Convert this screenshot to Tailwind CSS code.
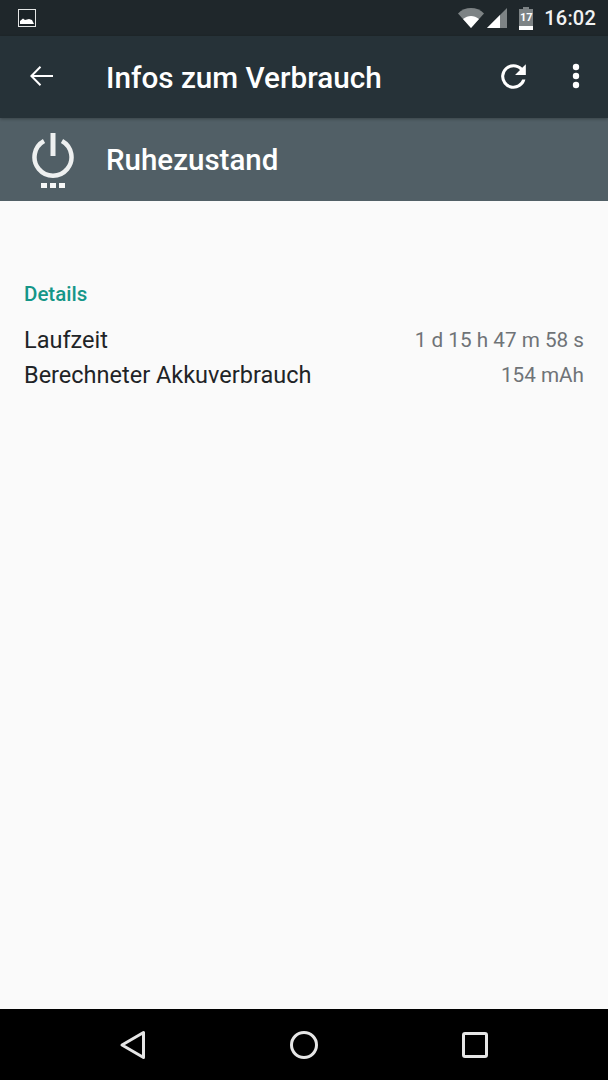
<!DOCTYPE html>
<html lang="de">
  <head>
    <meta charset="UTF-8">
    <title>Infos zum Verbrauch</title>
    <script src="https://cdn.jsdelivr.net/npm/@tailwindcss/browser@4"></script>
  </head>
  <body class="w-[608px] h-[1080px] overflow-hidden flex flex-col bg-[#fafafa] font-['Roboto',sans-serif]">
    <!-- status bar -->
    <div class="h-[36px] shrink-0 bg-[#1f272b] flex items-center pl-[18px] pr-[12px]">
      <svg width="18" height="18" viewBox="0 0 18 18" class="mt-[-1px]">
        <rect x="0.5" y="0.5" width="17" height="17" fill="#1a2226" stroke="#e4e6e6" stroke-width="1"/>
        <path d="M2 15 L2 12 L5 9.5 L7 11 L11 10 L14 11 L16 15 Z" fill="#fff"/>
      </svg>
      <div class="ml-auto flex items-center">
        <svg width="26" height="20" viewBox="0 0 26 20" class="ml-[-1px]">
          <path d="M0 5.5 C7 -1.8 19 -1.8 26 5.5 L13 20 Z" fill="#7d8385"/>
          <path d="M5 11 C10 7 16 7 21 11 L13 20 Z" fill="#fff"/>
        </svg>
        <svg width="20" height="20" viewBox="0 0 20 20" class="ml-[3px]">
          <path d="M0 20 L20 0 L20 20 Z" fill="#7d8385"/>
          <path d="M0 20 L13 7 L13 20 Z" fill="#fff"/>
        </svg>
        <div class="ml-[12px] w-[14px] h-[23px] relative flex flex-col items-center">
          <div class="w-[6px] h-[2px] bg-[#7d8385]"></div>
          <div class="w-[14px] h-[21px] bg-[#7d8385] flex flex-col justify-end">
            <div class="h-[4px] bg-white"></div>
          </div>
          <span class="absolute top-[5px] left-0 w-full text-center text-[11px] leading-[12px] font-bold text-white">17</span>
        </div>
        <span class="ml-[11px] text-[20px] leading-[24px] font-medium text-[#f1f2f2] tracking-[0.2px]">16:02</span>
      </div>
    </div>

    <!-- toolbar -->
    <div class="h-[82px] shrink-0 bg-[#263238] flex items-center relative z-10 shadow-[0_1px_3px_rgba(0,0,0,0.3)]">
      <svg width="24" height="24" viewBox="0 0 24 24" class="ml-[29px] mt-[-2px]">
        <path d="M24 11H4.8l7.4-7.4L10.8 2 1 12l9.8 10 1.4-1.6L4.8 13H24z" fill="#fff"/>
      </svg>
      <h1 class="ml-[53px] mt-[1px] text-[29.7px] leading-[36px] font-medium text-[#fff]">Infos zum Verbrauch</h1>
      <svg width="37" height="37" viewBox="0 0 24 24" class="ml-auto mt-[-2px]">
        <path d="M17.65 6.35A7.96 7.96 0 0 0 12 4a8 8 0 1 0 7.73 10h-2.08A6 6 0 1 1 12 6c1.66 0 3.14.69 4.22 1.78L13 11h7V4z" fill="#fff"/>
      </svg>
      <svg width="8" height="26" viewBox="0 0 8 26" class="ml-[40px] mr-[28px] mt-[-2px]">
        <circle cx="4" cy="4" r="3.2" fill="#fff"/>
        <circle cx="4" cy="13" r="3.2" fill="#fff"/>
        <circle cx="4" cy="22" r="3.2" fill="#fff"/>
      </svg>
    </div>

    <!-- header -->
    <div class="h-[83px] shrink-0 bg-[#515f66] flex items-center">
      <svg width="42" height="56" viewBox="0 0 42 56" class="ml-[32px] mt-[3px]">
        <path d="M12 8 A18.5 18.5 0 1 0 30 8" fill="none" stroke="#eef0f0" stroke-width="4.5"/>
        <rect x="18.5" y="0" width="5" height="23" fill="#eef0f0"/>
        <rect x="9" y="50" width="6" height="5" fill="#f6f7f7"/>
        <rect x="18" y="50" width="6" height="5" fill="#f6f7f7"/>
        <rect x="27" y="50" width="6" height="5" fill="#f6f7f7"/>
      </svg>
      <span class="ml-[32px] mt-[1px] text-[29.5px] leading-[36px] font-medium text-white">Ruhezustand</span>
    </div>

    <!-- details -->
    <div class="flex-1 px-[24px] pt-[79px]">
      <h2 class="text-[20.5px] leading-[28px] font-medium text-[#159688]">Details</h2>
      <div class="mt-[15px] flex items-center justify-between h-[35px]">
        <span class="text-[23.5px] leading-[35px] text-[#1f2427]">Laufzeit</span>
        <span class="text-[20.7px] leading-[35px] text-[#6f7377]">1 d 15 h 47 m 58 s</span>
      </div>
      <div class="flex items-center justify-between h-[35px]">
        <span class="text-[23.5px] leading-[35px] text-[#1f2427]">Berechneter Akkuverbrauch</span>
        <span class="text-[20.7px] leading-[35px] text-[#6f7377]">154 mAh</span>
      </div>
    </div>

    <!-- nav bar -->
    <div class="h-[71px] shrink-0 bg-black flex items-center relative">
      <svg width="28" height="30" viewBox="0 0 28 30" class="ml-[119px] mt-[1px]">
        <path d="M3 15 L24.5 2.5 L24.5 27.5 Z" fill="none" stroke="#e6e6e6" stroke-width="3" stroke-linejoin="round"/>
      </svg>
      <svg width="30" height="30" viewBox="0 0 30 30" class="ml-[142px] mt-[1px]">
        <circle cx="15" cy="15" r="12.5" fill="none" stroke="#e6e6e6" stroke-width="3"/>
      </svg>
      <svg width="26" height="26" viewBox="0 0 26 26" class="ml-[143px] mt-[1px]">
        <rect x="1.5" y="1.5" width="23" height="23" rx="1.5" fill="none" stroke="#e6e6e6" stroke-width="3"/>
      </svg>
    </div>
  </body>
</html>
